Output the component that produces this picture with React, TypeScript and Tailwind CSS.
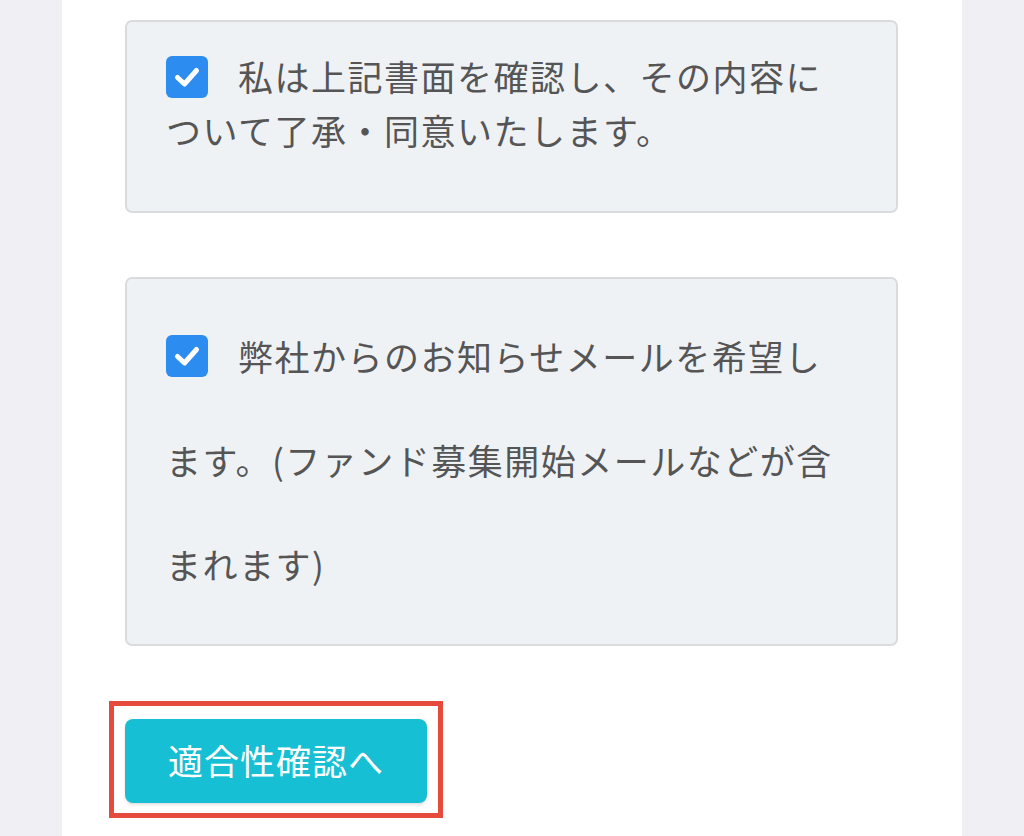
const font = { fontFamily: '"Noto Sans CJK JP", "Noto Sans", sans-serif' };

function Check() {
  return (
    <span className="inline-flex h-[42px] w-[42px] items-center justify-center rounded-[6px] bg-[#2d8cf0] align-middle mr-[30px] relative -top-[5px]">
      <svg width="42" height="42" viewBox="0 0 42 42" fill="none">
        <path d="M11.5 21.5l7 6.5L30.5 14.5" stroke="#fff" strokeWidth="5" strokeLinecap="round" strokeLinejoin="round" />
      </svg>
    </span>
  );
}

export default function App() {
  return (
    <div className="min-h-[836px] w-full bg-[#efeff4] flex justify-center" style={font}>
      <div className="w-[900px] bg-white pt-[20px] pb-[40px] pl-[63px] pr-[64px]">
        <div className="rounded-[7px] border-2 border-[#d9dcdf] bg-[#eff2f5] pl-[39px] pr-[40px] pt-[27px] pb-[55px] text-[35px] leading-[53px] tracking-[1.5px] text-[#555]">
          <Check />
          私は上記書面を確認し、その内容に
          <br />
          ついて了承・同意いたします。
        </div>

        <div className="mt-[64px] rounded-[7px] border-2 border-[#d9dcdf] bg-[#eff2f5] pl-[39px] pr-[40px] pt-[25px] pb-[28px] text-[35px] leading-[104px] tracking-[1.5px] text-[#555]">
          <Check />
          弊社からのお知らせメールを希望し
          <br />
          ます。(ファンド募集開始メールなどが含
          <br />
          まれます)
        </div>

        <div className="mt-[55px] ml-[-16px] inline-block border-[5px] border-[#e64a3d] px-[11px] pt-[13px] pb-[10px]">
          <button className="h-[84px] w-[302px] rounded-[8px] bg-[#16bfd3] text-[35px] tracking-[1px] text-white shadow-[0_2px_3px_rgba(0,0,0,0.12)]">
            適合性確認へ
          </button>
        </div>
      </div>
    </div>
  );
}
